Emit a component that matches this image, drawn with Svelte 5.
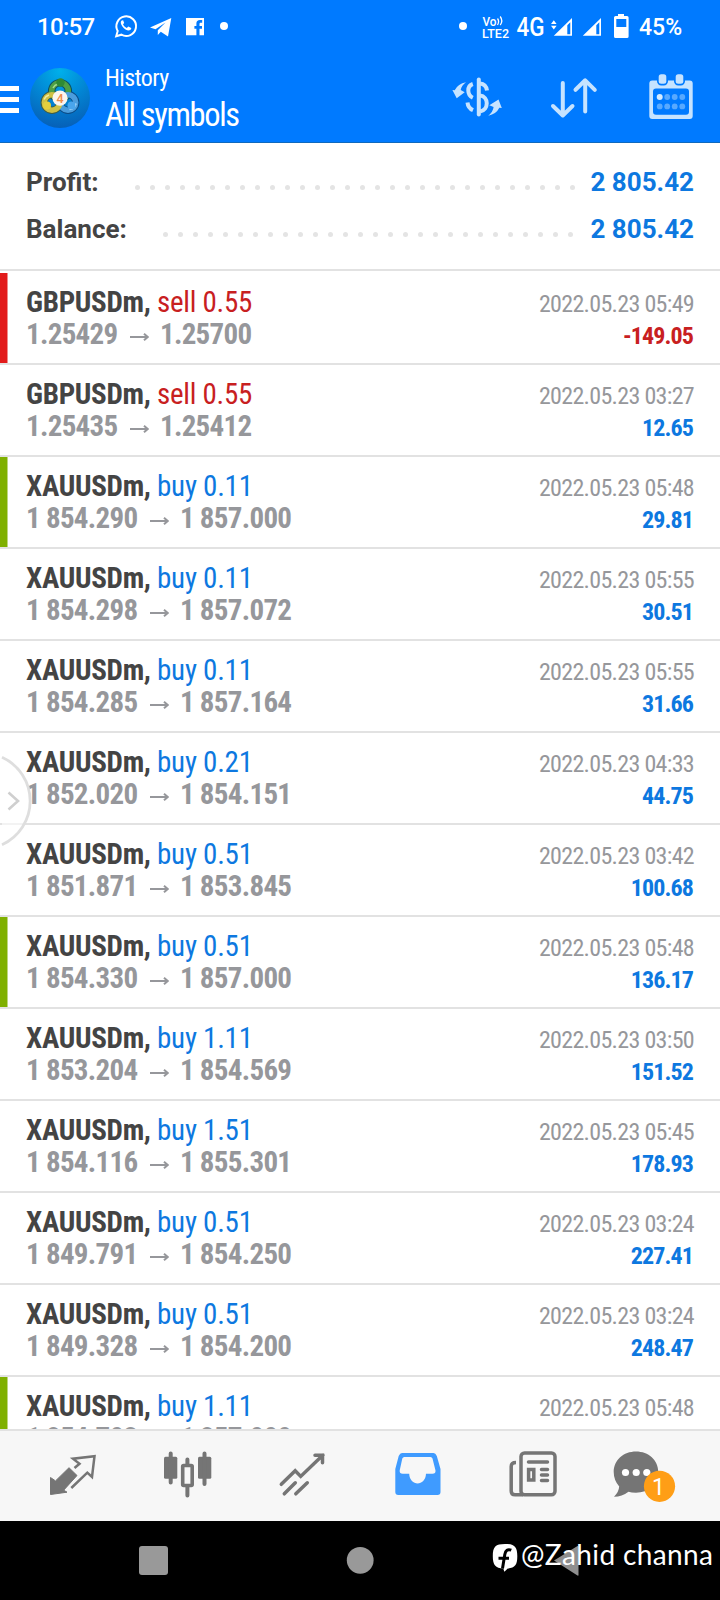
<script lang="ts">
  interface Deal {
    symbol: string;
    side:   'buy' | 'sell';
    volume: string;
    open:   string;
    close:  string;
    time:   string;
    profit: string;
    mark?:  'sl' | 'tp';
  }

  const deals: Deal[] = [
    { symbol: 'GBPUSDm', side: 'sell', volume: '0.55', open: '1.25429', close: '1.25700', time: '2022.05.23 05:49', profit: '-149.05', mark: 'sl' },
    { symbol: 'GBPUSDm', side: 'sell', volume: '0.55', open: '1.25435', close: '1.25412', time: '2022.05.23 03:27', profit: '12.65' },
    { symbol: 'XAUUSDm', side: 'buy', volume: '0.11', open: '1 854.290', close: '1 857.000', time: '2022.05.23 05:48', profit: '29.81', mark: 'tp' },
    { symbol: 'XAUUSDm', side: 'buy', volume: '0.11', open: '1 854.298', close: '1 857.072', time: '2022.05.23 05:55', profit: '30.51' },
    { symbol: 'XAUUSDm', side: 'buy', volume: '0.11', open: '1 854.285', close: '1 857.164', time: '2022.05.23 05:55', profit: '31.66' },
    { symbol: 'XAUUSDm', side: 'buy', volume: '0.21', open: '1 852.020', close: '1 854.151', time: '2022.05.23 04:33', profit: '44.75' },
    { symbol: 'XAUUSDm', side: 'buy', volume: '0.51', open: '1 851.871', close: '1 853.845', time: '2022.05.23 03:42', profit: '100.68' },
    { symbol: 'XAUUSDm', side: 'buy', volume: '0.51', open: '1 854.330', close: '1 857.000', time: '2022.05.23 05:48', profit: '136.17', mark: 'tp' },
    { symbol: 'XAUUSDm', side: 'buy', volume: '1.11', open: '1 853.204', close: '1 854.569', time: '2022.05.23 03:50', profit: '151.52' },
    { symbol: 'XAUUSDm', side: 'buy', volume: '1.51', open: '1 854.116', close: '1 855.301', time: '2022.05.23 05:45', profit: '178.93' },
    { symbol: 'XAUUSDm', side: 'buy', volume: '0.51', open: '1 849.791', close: '1 854.250', time: '2022.05.23 03:24', profit: '227.41' },
    { symbol: 'XAUUSDm', side: 'buy', volume: '0.51', open: '1 849.328', close: '1 854.200', time: '2022.05.23 03:24', profit: '248.47' },
    { symbol: 'XAUUSDm', side: 'buy', volume: '1.11', open: '1 854.703', close: '1 857.000', time: '2022.05.23 05:48', profit: '254.97', mark: 'tp' },
  ];

  const totals = [
    { label: 'Profit:',  value: '2 805.42', dots: 30 },
    { label: 'Balance:', value: '2 805.42', dots: 28 },
  ];
</script>

<div class="screen">
  <header>
    <div class="status">
      <span class="clock">10:57</span>
      <svg class="notif" width="120" height="30" viewBox="112 11 120 30">
        <path d="M116.2 36.3l1.5-5.3a9.8 9.8 0 1 1 3.7 3.7z" fill="none" stroke="#fff" stroke-width="2" />
        <path d="M121.7 20.5c-1.5 1-1.2 3.4.7 5.9 2.3 3 5.300 4.600 7.300 3.900 1.300-.5 1.700-1.500 1.500-2.300l-2.900-1.500-1.500 1.500c-1.800-.8-3-2-3.800-3.700l1.200-1.400-1.100-2.700z" fill="#fff" />
        <path d="M150 27.500L171.300 18 168 36.500 160.800 31.800 157.800 35V30.200L165.500 22.500 155.500 29.300z" fill="#fff" />
        <path d="M186 18h18v17.300h-4.500v-6.500h2.500v-2.800h-2.500v-1.800c0-1 .5-1.400 1.400-1.400h1.300V20h-2.200c-2.400 0-3.600 1.300-3.600 3.600V26h-2v2.800h2v6.500H186z" fill="#fff" />
        <circle cx="224" cy="26" r="4" fill="#fff" />
      </svg>
      <svg class="radio" width="186" height="30" viewBox="450 11 186 30">
        <g fill="#fff">
          <circle cx="463" cy="26" r="4" />
          <text class="volte" x="482.500" y="25.700" textLength="14" lengthAdjust="spacingAndGlyphs">Vo</text>
          <text class="volte" x="482" y="37.500" textLength="27" lengthAdjust="spacingAndGlyphs">LTE2</text>
          <path d="M497.500 18.500q2.200 3 0 6.500M500.200 16.500q3.200 4.500 0 8.500" fill="none" stroke="#fff" stroke-width="1.300" />
          <text class="net" x="516.500" y="36" textLength="28" lengthAdjust="spacingAndGlyphs">4G</text>
          <path d="M551 24l2.800-3.800 2.800 3.800zM551 25.800h5.600l-2.800 3.800z" />
          <path d="M572 18v17.800h-18.200zM570.300 22.200l-3 3v9h3z" fill-rule="evenodd" />
          <path d="M601 18v17.800h-18.200zM599.300 22.200l-3 3v9h3z" fill-rule="evenodd" />
          <path d="M618 14h6v2h3a1.600 1.600 0 0 1 1.600 1.600v18.800a1.600 1.600 0 0 1-1.600 1.600h-11.400a1.600 1.600 0 0 1-1.600-1.600V17.600a1.600 1.600 0 0 1 1.600-1.600H618zM616.300 19v8h10v-8z" fill-rule="evenodd" />
        </g>
      </svg>
      <span class="charge">45%</span>
    </div>

    <div class="appbar">
      <div class="burger"><i></i><i></i><i></i></div>
      <svg class="logo" width="60" height="60" viewBox="30 68 60 60">
        <defs>
          <radialGradient id="disc" cx=".5" cy=".05" r=".95">
            <stop offset="0" stop-color="#00b0ea" />
            <stop offset=".5" stop-color="#0286d4" />
            <stop offset="1" stop-color="#0660b8" />
          </radialGradient>
        </defs>
        <circle cx="60" cy="98" r="30" fill="url(#disc)" />
        <g fill="none" stroke-width="5.500">
          <circle cx="60" cy="91" r="8.300" stroke="#0c4f63" stroke-width="7.500" />
          <circle cx="52" cy="102.500" r="7.700" stroke="#415d45" stroke-width="7.500" />
          <circle cx="68" cy="102.500" r="7.700" stroke="#0b4b86" stroke-width="7.500" />
          <circle cx="60" cy="91" r="8.300" stroke="#4fa045" />
          <circle cx="68" cy="102.500" r="7.700" stroke="#4b9ddd" />
          <circle cx="52" cy="102.500" r="7.700" stroke="#cfc145" />
          <path d="M53 88a8.300 8.300 0 0 1 5-4" stroke="#a5dc90" stroke-width="1.500" />
          <path d="M44 99.500a8.500 8.500 0 0 1 5-4.500" stroke="#f2eba0" stroke-width="1.500" />
          <path d="M69.500 109.500a7.700 7.700 0 0 0 6.500-6" stroke="#b8e0fb" stroke-width="1.500" />
        </g>
        <circle cx="60.500" cy="82.500" r="4.200" fill="#2f8a35" />
        <circle cx="47" cy="105.500" r="4" fill="#e3cf3e" />
        <circle cx="71.500" cy="105.500" r="4" fill="#4aa5ec" />
        <circle cx="60" cy="98.200" r="7.600" fill="#fbf5ee" />
        <text class="four" x="60" y="102.800" text-anchor="middle">4</text>
      </svg>
      <div class="titles">
        <span class="small">History</span>
        <span class="big">All symbols</span>
      </div>
      <svg class="tools" width="250" height="54" viewBox="448 70 250 54">
        <g fill="none" stroke="#c6e3ff" stroke-width="4">
          <path d="M478.800 79.500v35" stroke-linecap="round" />
          <path d="M472.800 84c-6 2-6 11 0 13.700M467.500 102.500q.5 5.500 5.500 7.700" />
          <path d="M480 83.500q6 .5 7 7M480 95.500c9 1 9 14.500 0 16" />
          <path d="M562.800 83v31.500M553 106l9.800 9.500 9.700-9.500M585.200 111.500v-31M575.500 89.800l9.700-9.500 9.600 9.500" stroke-linecap="round" stroke-linejoin="round" />
        </g>
        <g fill="#c6e3ff">
          <path d="M466 82.300q-4.500 3.300-5.300 7.700l4 2.300-8 5.900-4.300-8.300 2.300.3q3.300-6.400 11.300-7.900z" />
          <path d="M488.300 115.700q4.800-4 5.300-8.700l-4.300-1.700 9.200-5.800 3.300 8.500-2.500-.3q-3 6.300-11 8z" />
          <path d="M652.300 80.500h37.400a3 3 0 0 1 3 3V116a3 3 0 0 1-3 3h-37.400a3 3 0 0 1-3-3V83.500a3 3 0 0 1 3-3z" />
          <rect x="658.700" y="74.300" width="7.600" height="9.400" rx="2.500" stroke="#007aff" stroke-width="3.400" paint-order="stroke" />
          <rect x="675.700" y="74.300" width="7.600" height="9.400" rx="2.500" stroke="#007aff" stroke-width="3.400" paint-order="stroke" />
        </g>
        <rect x="653" y="88.500" width="36" height="26.300" rx="3" fill="#007aff" />
        <g fill="#58a9ff">
          <circle cx="659.700" cy="97" r="3" fill="#d5ebff" />
          <circle cx="667.200" cy="97" r="2.900" />
          <circle cx="674.700" cy="97" r="2.900" />
          <circle cx="682.300" cy="97" r="2.900" />
          <circle cx="659.700" cy="106.400" r="2.900" />
          <circle cx="667.200" cy="106.400" r="2.900" />
          <circle cx="674.700" cy="106.400" r="2.900" />
          <circle cx="682.300" cy="106.400" r="2.900" />
        </g>
      </svg>
    </div>
  </header>

  <section class="totals">
    {#each totals as t}
      <div class="total">
        <span class="label">{t.label}</span>
        <span class="dots">{#each { length: t.dots } as _}<i></i>{/each}</span>
        <span class="value">{t.value}</span>
      </div>
    {/each}
  </section>

  <main>
    {#each deals as d}
      <div class="deal {d.mark ?? ''}">
        <div class="left">
          <div class="line name"><b>{d.symbol},</b> <span class={d.side}>{d.side} {d.volume}</span></div>
          <div class="line price">
            <span>{d.open}</span>
            <svg class="to" width="19" height="10" viewBox="0 0 19 10"><path d="M0 5h17M14 1.800L17.700 5 14 8.200" /></svg>
            <span>{d.close}</span>
          </div>
        </div>
        <div class="right">
          <div class="line time">{d.time}</div>
          <div class="line profit" class:loss={d.profit.startsWith('-')}>{d.profit}</div>
        </div>
      </div>
    {/each}
  </main>

  <nav class="tabs">
    <svg width="720" height="90" viewBox="0 1431 720 90">
      <g fill="#757575">
        <path d="M50.500 1477.500l5 3.400 13.500-13.200 8 7.800-13.300 14.700 3.300 2-16.500 2.300z" stroke="#757575" stroke-linejoin="round" />
        <path d="M74.500 1468l5-4.300-6.500-5 21.500-2.500-2.500 20.800-4.700-4.300L71.300 1488" fill="none" stroke="#757575" stroke-width="2.500" />
        <rect x="164" y="1456.700" width="13.300" height="22" rx="1.500" />
        <rect x="198" y="1456.700" width="13.300" height="22" rx="1.500" />
        <rect x="182.700" y="1465.500" width="9.500" height="20" rx="1" fill="none" stroke="#757575" stroke-width="3.600" />
        <path d="M170.700 1453.500v29M204.500 1453.500v30.500M187.400 1459.500v5M187.400 1487v8.500" stroke="#757575" stroke-width="4" stroke-linecap="round" />
        <path d="M281.300 1484.300l13.900-13.500 5.500 5.600 22.300-21.300M315 1455.200h7.500v7.500M295.300 1482.800l-11 11M307.300 1482.800l-11.500 11" fill="none" stroke="#757575" stroke-width="3.500" stroke-linecap="round" />
        <path d="M402 1453h31.500q2 0 3.300 3l3.700 13v23a3 3 0 0 1-3 3h-39.200a3 3 0 0 1-3-3v-23l3.400-13q1.300-3 3.300-3zM404.300 1457q-1.500 0-2 1.500l-2.600 12q-.3 3.300 3 3.300h6.500c.5 12.800 16.300 12.800 16.800 0h6.500q3.300 0 3-3.300l-3-12q-.5-1.500-2-1.500z" fill="#3f9bff" fill-rule="evenodd" />
        <g fill="none" stroke="#757575" stroke-width="3.500">
          <rect x="521" y="1453" width="34" height="41.700" rx="3.500" />
          <path d="M516 1462.500q-4.800 0-4.800 4v24.500q0 3.800 3.800 3.800h8" />
          <path d="M528.500 1462h19M541.500 1469.500h6M541.500 1475h6M541.500 1480.500h6" stroke-linecap="round" />
          <rect x="528.600" y="1469.500" width="5.200" height="10.500" />
        </g>
        <path d="M636 1451.500c12.500 0 22.300 8.500 22.300 20.500s-9.800 20.700-22.300 20.700q-4.500 0-7.500-1-6.500 5-14.500 5 4.800-4.500 5.200-10.200-5.500-6.500-5.500-14.500c0-12 9.800-20.500 22.300-20.500z" />
      </g>
      <g fill="#fff">
        <circle cx="625.500" cy="1472.500" r="3.600" />
        <circle cx="636.200" cy="1472.500" r="3.600" />
        <circle cx="646.800" cy="1472.500" r="3.600" />
      </g>
      <circle cx="659.500" cy="1486.300" r="15.600" fill="#ff9e16" />
      <text class="badge" x="658.500" y="1494.500" text-anchor="middle">1</text>
    </svg>
  </nav>

  <footer>
    <svg width="720" height="79" viewBox="0 1521 720 79">
      <rect x="139" y="1546" width="29" height="29" rx="3" fill="#999" />
      <circle cx="360.200" cy="1560.300" r="13.400" fill="#999" />
      <path d="M554 1560.500L577.500 1546q1 0 1 1v28q0 1-1 .5z" fill="#8f8f8f" />
      <path d="M505 1544c9.500 0 12.300 2.700 12.300 12.300 0 8.500-2.300 11.700-9.500 12.200l-3.500 3.300-1-3.200c-7.800-.3-10.500-3.500-10.500-12.300 0-9.600 2.700-12.300 12.200-12.300z" fill="#fff" />
      <path d="M511.300 1550.200c-3.600-1.400-5.800.3-6.500 4.300l-2.300 14M498.500 1558.200h10.500" fill="none" stroke="#000" stroke-width="3" />
      <text class="mark" x="521" y="1565" textLength="192" lengthAdjust="spacing">@Zahid channa</text>
    </svg>
  </footer>

  <svg class="handle" width="34" height="92" viewBox="0 755 34 92">
    <path d="M2 757.300a48 48 0 0 1 0 87.400z" fill="#fff" fill-opacity=".6" />
    <path d="M2 757.300a48 48 0 0 1 0 87.400" fill="none" stroke="#dedede" stroke-width="2.800" />
    <path d="M8.500 792.500l9.500 8.500-9.500 8.500" fill="none" stroke="#cfcfcf" stroke-width="2.600" />
  </svg>
</div>

<style>
  :global(body) { margin: 0; }

  .screen {
    position: relative;
    width: 720px; height: 1600px;
    display: flex; flex-direction: column;
    overflow: hidden;
    background: #fff;
    font-family: 'Roboto Condensed', Roboto, sans-serif;
    font-stretch: 75%;
  }
  svg { display: block; flex-shrink: 0; }

  header { height: 142px; flex-shrink: 0; background: #007aff; border-bottom: 1px solid #1069bd; color: #fff; }
  .status { display: flex; height: 52px; padding: 0 37px; align-items: center; font-family: Roboto, sans-serif; font-stretch: 100%; font-size: 24px; font-weight: 500; }
  .clock  { width: 75px; padding-top: 2px; letter-spacing: -.7px; }
  .radio  { margin-left: auto; }
  .charge { width: 47px; padding: 2px 0 0 3px; box-sizing: border-box; font-size: 23px; }
  .volte  { font: 500 12px Roboto, sans-serif; }
  .net    { font: 500 26px Roboto, sans-serif; }

  .appbar { display: flex; height: 90px; align-items: center; }
  .burger { display: flex; flex-direction: column; gap: 6px; width: 19px; margin-top: 4px; }
  .burger i { height: 5px; background: #fff; }
  .logo   { margin: 2px 0 0 11px; }
  .four   { font: 500 12.500px Roboto, sans-serif; fill: #ee8b4a; }
  .titles { display: flex; flex-direction: column; margin-left: 15px; padding-top: 2px; white-space: nowrap; }
  .small  { font-size: 24px; line-height: 34px; letter-spacing: -.600px; }
  .big    { font-size: 32.500px; line-height: 41px; letter-spacing: -1.350px; }
  .tools  { margin: 0 22px 0 auto; }

  .totals { height: 128px; flex-shrink: 0; box-sizing: border-box; padding: 15px 26px 0 26px; border-bottom: 2px solid #e2e2e2; font-family: Roboto, sans-serif; font-stretch: 100%; }
  .total  { display: flex; align-items: center; height: 47px; font-size: 26px; font-weight: 700; color: #444; }
  .value  { width: 104px; text-align: right; color: #0d78e0; white-space: nowrap; }
  .dots   { display: flex; gap: 10px; margin: 12px 15px 0 auto; }
  .total:last-child .dots { margin-right: 17px; }
  .dots i { width: 5px; height: 5px; border-radius: 50%; background: #e4e4e4; }

  main  { height: 1156px; margin-top: 2px; flex-shrink: 0; overflow: hidden; }
  .deal { display: flex; justify-content: space-between; height: 92px; box-sizing: border-box; padding: 13px 26px 0; border-bottom: 2px solid #e2e2e2; }
  .deal.sl { box-shadow: inset 7.500px 0 #e21b1b; }
  .deal.tp { box-shadow: inset 7.500px 0 #7fb000; }
  .line  { line-height: 32px; white-space: nowrap; font-size: 29px; }
  .name   { letter-spacing: -.250px; }
  .name b { color: #444; letter-spacing: -.300px; }
  .buy   { color: #0d78e0; }
  .sell  { color: #c8201f; }
  .price { display: flex; align-items: center; font-weight: 700; color: #96979b; letter-spacing: -.700px; }
  .to    { margin: 5px 11px 0 12.500px; fill: none; stroke: #96979b; stroke-width: 2; }
  .right { padding-top: 2px; text-align: right; }
  .right .line { font-size: 24px; }
  .right .time { color: #96979b; letter-spacing: -.680px; }
  .right .profit { padding-right: 1px; font-weight: 700; color: #0d78e0; letter-spacing: -.900px; }
  .right .loss { color: #c8201f; }

  .tabs  { height: 90px; flex-shrink: 0; background: #f7f7f7; border-top: 2px solid #e2e2e2; }
  .badge { font: 400 23px Roboto, sans-serif; fill: #fff; }
  footer { height: 79px; flex-shrink: 0; background: #000; }
  .mark  { font: 400 28px Lato, sans-serif; fill: #fff; }

  .handle { position: absolute; left: 0; top: 755px; }
</style>
